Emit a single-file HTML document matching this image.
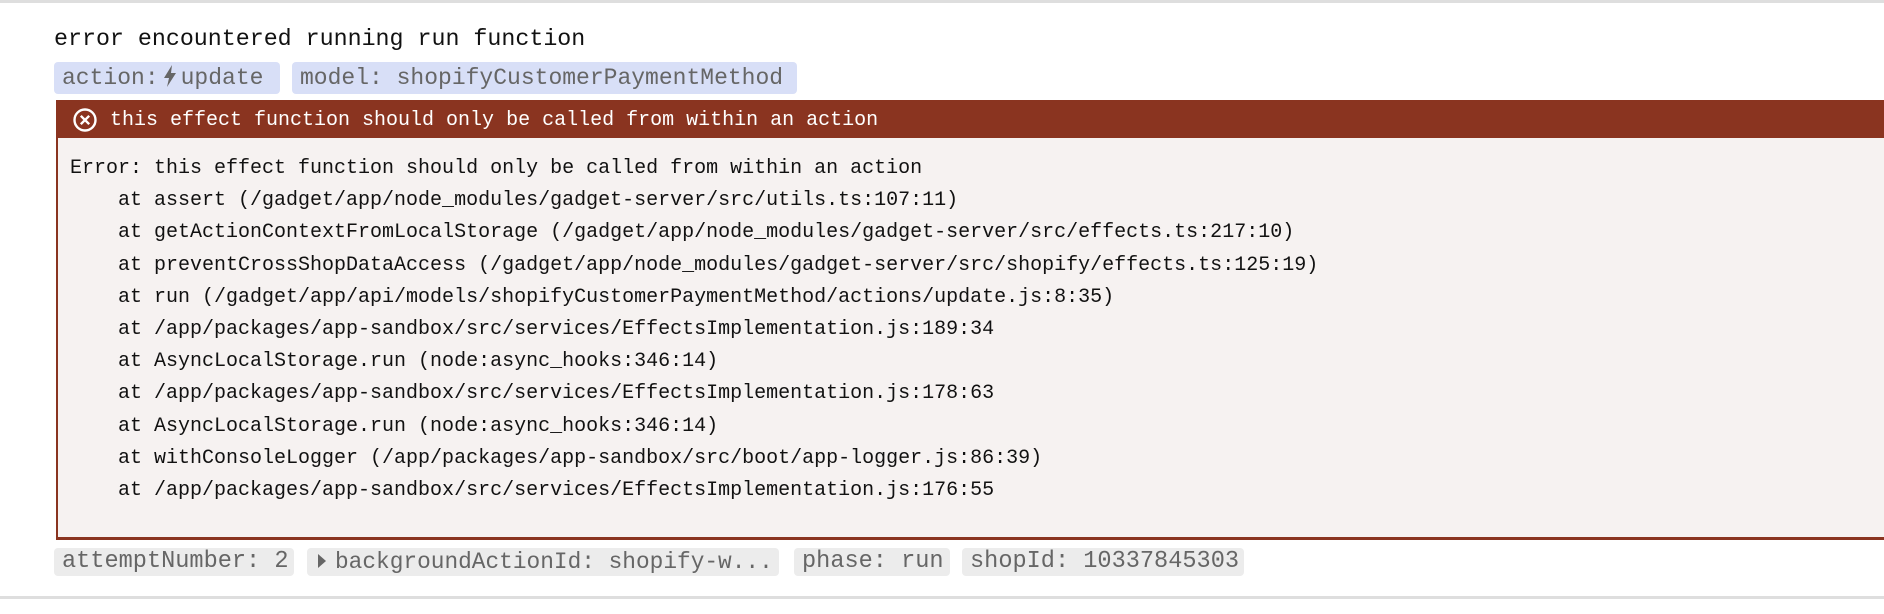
<!DOCTYPE html>
<html><head><meta charset="utf-8"><style>
html,body{margin:0;padding:0;background:#fff;width:1884px;height:614px;overflow:hidden}
body{font-family:"Liberation Mono",monospace;position:relative}
.line{position:absolute;left:0;width:1884px;height:3px;background:#dedede}
.title{position:absolute;left:54px;top:25px;font-size:23.3px;line-height:28px;color:#111;white-space:pre}
.tag{position:absolute;height:32px;line-height:32px;font-size:23px;color:#666;border-radius:4px;white-space:pre;padding-left:8px;box-sizing:border-box;overflow:hidden}
.blue{background:#d8dff7;top:62px}
.gray{background:#ececec;top:548px;height:28px;line-height:28px;font-size:23.6px}
.box{position:absolute;left:56px;top:100px;width:1840px;height:440px;background:#f6f2f1;border-left:2px solid #8a3420;border-bottom:3px solid #8a3420;box-sizing:border-box}
.hdr{position:absolute;left:0;top:0;right:0;height:38px;background:#8a3420;color:#fff;font-size:20px;line-height:42px;white-space:pre}
.hdr span{position:absolute;left:52px}
pre{position:absolute;left:12px;top:53px;margin:0;font-family:"Liberation Mono",monospace;font-size:20px;line-height:32.2px;color:#111}
</style></head><body>
<div class="line" style="top:0"></div>
<div class="title">error encountered running run function</div>
<div class="tag blue" style="left:54px;width:226px">action:<svg width="18" height="24" viewBox="0 0 18 24" style="vertical-align:-4px;margin:0 2px"><path d="M11 1 L3 14 H8 L6 23 L15 9 H10 Z" fill="#666"/></svg>update</div>
<div class="tag blue" style="left:292px;width:505px">model: shopifyCustomerPaymentMethod</div>
<div class="box">
<div class="hdr"><svg width="26" height="26" viewBox="0 0 26 26" style="position:absolute;left:14px;top:7px"><circle cx="13" cy="13" r="10.5" fill="none" stroke="#fff" stroke-width="2.4"/><path d="M8.8 8.8 L17.2 17.2 M17.2 8.8 L8.8 17.2" stroke="#fff" stroke-width="2.4"/></svg><span>this effect function should only be called from within an action</span></div>
<pre>Error: this effect function should only be called from within an action
    at assert (/gadget/app/node_modules/gadget-server/src/utils.ts:107:11)
    at getActionContextFromLocalStorage (/gadget/app/node_modules/gadget-server/src/effects.ts:217:10)
    at preventCrossShopDataAccess (/gadget/app/node_modules/gadget-server/src/shopify/effects.ts:125:19)
    at run (/gadget/app/api/models/shopifyCustomerPaymentMethod/actions/update.js:8:35)
    at /app/packages/app-sandbox/src/services/EffectsImplementation.js:189:34
    at AsyncLocalStorage.run (node:async_hooks:346:14)
    at /app/packages/app-sandbox/src/services/EffectsImplementation.js:178:63
    at AsyncLocalStorage.run (node:async_hooks:346:14)
    at withConsoleLogger (/app/packages/app-sandbox/src/boot/app-logger.js:86:39)
    at /app/packages/app-sandbox/src/services/EffectsImplementation.js:176:55</pre>
</div>
<div class="tag gray" style="left:54px;width:240px">attemptNumber: 2</div>
<div class="tag gray" style="left:307px;width:472px;font-size:22.8px"><svg width="14" height="18" viewBox="0 0 14 18" style="vertical-align:-2px;margin-right:6px"><path d="M3 2 L11 9 L3 16 Z" fill="#666"/></svg>backgroundActionId: shopify-w...</div>
<div class="tag gray" style="left:794px;width:156px">phase: run</div>
<div class="tag gray" style="left:962px;width:282px">shopId: 10337845303</div>
<div class="line" style="top:596px"></div>
</body></html>
